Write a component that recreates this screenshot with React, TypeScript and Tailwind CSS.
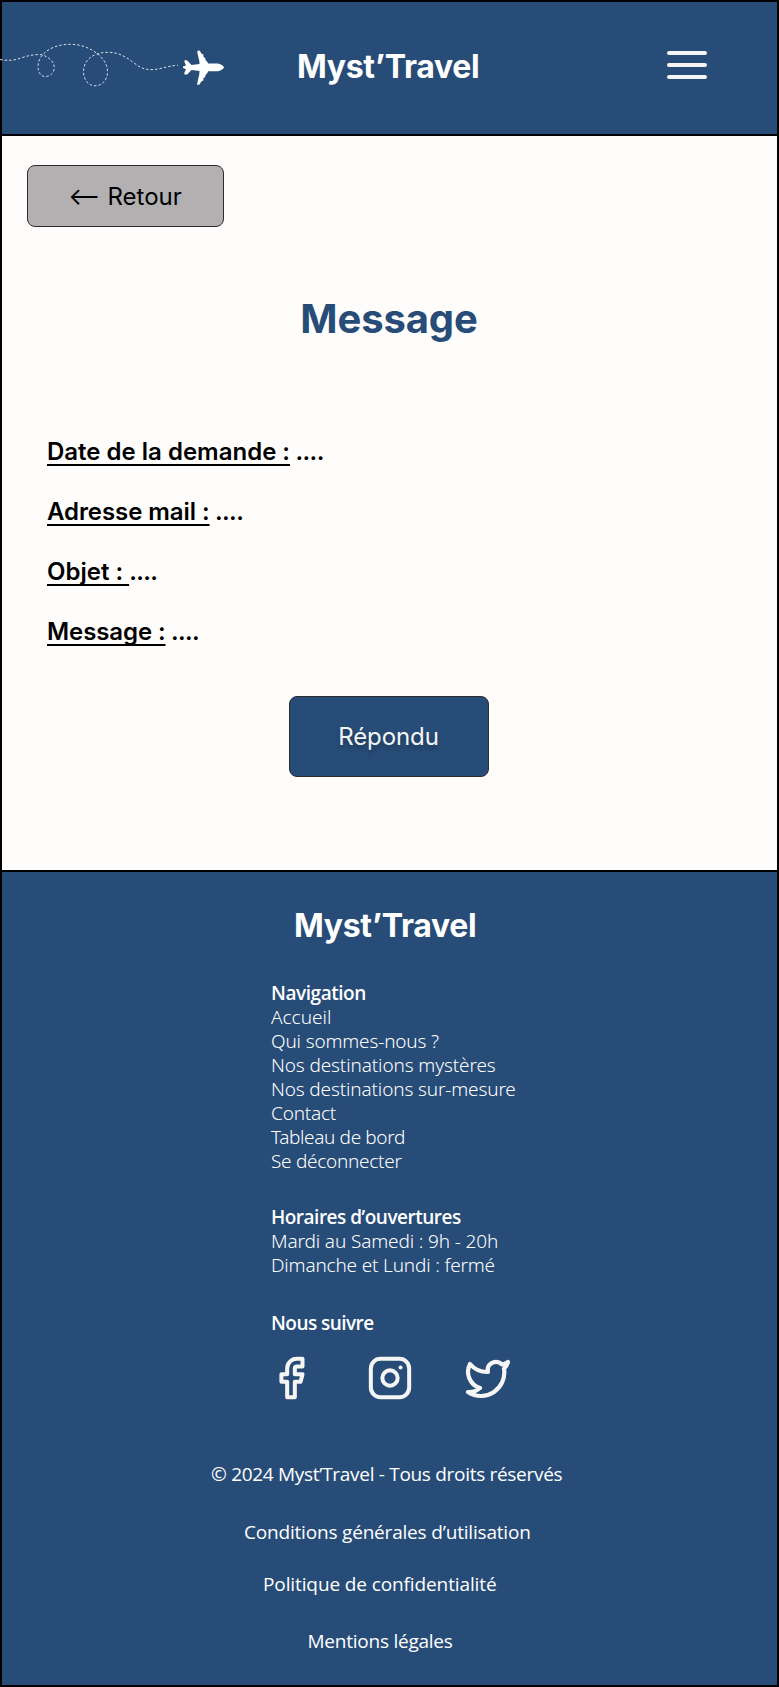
const logo = "font-['Inter',sans-serif] text-[32px] leading-[39px] font-bold tracking-[-0.33px] text-white";

const fields = [
  { label: "Date de la demande :", value: " ....", tracking: "" },
  { label: "Adresse mail :", value: " ....", tracking: "tracking-[-0.07px]" },
  { label: "Objet : ", value: "....", tracking: "" },
  { label: "Message :", value: " ....", tracking: "tracking-[-0.1px]" },
];

const navigation = [
  { text: "Accueil", tracking: "tracking-[0px]" },
  { text: "Qui sommes-nous ?", tracking: "tracking-[-0.16px]" },
  { text: "Nos destinations mystères", tracking: "tracking-[-0.12px]" },
  { text: "Nos destinations sur-mesure", tracking: "tracking-[-0.14px]" },
  { text: "Contact", tracking: "tracking-[-0.2px]" },
  { text: "Tableau de bord", tracking: "tracking-[-0.36px]" },
  { text: "Se déconnecter", tracking: "tracking-[-0.28px]" },
];

function Flight() {
  return (
    <svg className="block h-[132px] w-[226px] shrink-0 overflow-visible" viewBox="2 2 226 132" fill="none">
      <path
        d="M0 59.5C8 61 14 60.5 20 58.3C28 55.5 36 54 42 54.8C49 57 54.5 62 54.3 68C54 73 50 76.5 45.5 76.5C40.500 76.500 38 72 38 67C38 61 40.500 56.500 45 52.500C52 46.500 61 44.300 70 44.300C81 44.300 90 48 97 53.500C104 59 107.500 65 107.500 72C107.500 80 102 85.800 95 85.800C88 85.800 83.500 79.500 83.500 71.500C83.500 61 92 52.300 108 52.300C119 52.300 126 57 134 63C141 68 144 69.600 152 69.600C160 69.600 166 66 178 65.300"
        stroke="#E2E7ED"
        strokeWidth="0.95"
        strokeDasharray="2.500 2"
      />
      <path
        d="M183 66.5L186 65.500L184.300 61.500L185 60L187.200 60.500L191.500 65L199.500 64L199.300 61L197.200 52L198 50.500L199.800 50.700L201.300 53.500L203.300 54.500L203.500 57L205.200 58L205.500 60L207 61.500L208.300 63.600L218 63.600C221.500 64.300 223.500 66 224 67.300C223.500 68.800 221.500 70.500 218 71.200L208.300 71.200L207 73.500L205.500 75L205.200 77L203.500 78L203.300 80.500L201.300 81.500L199.500 84.500L197.300 84.900L197.300 83L199.300 74L199.500 71L191.500 70L187.200 74.500L184.500 74.500L184.300 73L186 69.200L183 68Z"
        fill="white"
      />
    </svg>
  );
}

const iconProps = {
  viewBox: "0 0 24 24",
  fill: "none",
  stroke: "#F5F5F5",
  strokeWidth: 2.1,
  strokeLinecap: "round",
  strokeLinejoin: "round",
} as const;

export default function App() {
  return (
    <div className="flex h-[1687px] w-[779px] flex-col border-2 border-black bg-[#FFFDFC] text-black">
      <header className="flex h-[134px] shrink-0 items-start border-b-2 border-black bg-[#274C77]">
        <Flight />
        <h1 className={`ml-[69px] mt-[45px] w-[186px] whitespace-nowrap ${logo}`}>Myst’Travel</h1>
        <button aria-label="Menu" className="ml-[184px] mt-[49px] flex w-10 flex-col gap-2">
          <span className="h-1 rounded-sm bg-[#F5F5F5]" />
          <span className="h-1 rounded-sm bg-[#F5F5F5]" />
          <span className="h-1 rounded-sm bg-[#F5F5F5]" />
        </button>
      </header>

      <main className="flex h-[734px] shrink-0 flex-col font-['Inter',sans-serif] text-2xl">
        <button className="ml-[25px] mt-[29px] flex h-[62px] w-[197px] items-center justify-center gap-[7px] rounded-lg border border-[#2C2C2C] bg-[#B2B0B1] pr-px leading-[29px]">
          <span>⟵</span>
          <span>Retour</span>
        </button>
        <h2 className="mt-[68px] pr-px text-center text-[40px] leading-[48px] font-bold tracking-[-0.1px] text-[#274C77]">Message</h2>
        <div className="ml-[45px] mt-[94px] flex flex-col gap-[31px] font-semibold leading-[29px]">
          {fields.map((f) => (
            <p key={f.label} className="whitespace-pre">
              <span className={`underline decoration-[1.5px] underline-offset-[4px] [text-decoration-skip-ink:none] ${f.tracking}`}>{f.label}</span>
              <span className="tracking-[-0.6px]">{f.value}</span>
            </p>
          ))}
        </div>
        <button className="ml-[287px] mt-[50px] h-[81px] w-[200px] rounded-lg border border-[#2C2C2C] bg-[#274C77] pt-px pr-px font-normal tracking-[-0.1px] text-[#F5F5F5] [text-shadow:0_4px_4px_rgba(0,0,0,0.25)]">
          Répondu
        </button>
      </main>

      <footer className="flex grow flex-col border-t-2 border-black bg-[#274C77] font-['Open_Sans',sans-serif] text-[19px] leading-6 text-white">
        <h2 className={`ml-[292px] mt-[34px] ${logo}`}>Myst’Travel</h2>
        <nav className="ml-[269px] mt-[36px]">
          <h3 className="font-semibold tracking-[-0.45px]">Navigation</h3>
          <ul className="font-['Noto_Sans',sans-serif] font-light">
            {navigation.map((n) => (
              <li key={n.text} className={n.tracking}>{n.text}</li>
            ))}
          </ul>
        </nav>
        <section className="ml-[269px] mt-8">
          <h3 className="font-semibold tracking-[-0.5px]">Horaires d’ouvertures</h3>
          <div className="font-['Noto_Sans',sans-serif] font-light">
            <p className="tracking-[-0.13px]">Mardi au Samedi : 9h - 20h</p>
            <p className="tracking-[-0.17px]">Dimanche et Lundi : fermé</p>
          </div>
        </section>
        <section className="mt-[34px]">
          <h3 className="ml-[269px] font-semibold tracking-[-0.55px]">Nous suivre</h3>
          <div className="ml-[266px] mt-5 flex h-[46px] items-center">
            <svg {...iconProps} className="size-[46px]">
              <path d="M18 2h-3a5 5 0 0 0-5 5v3H7v4h3v8h4v-8h3l1-4h-4V7a1 1 0 0 1 1-1h3z" />
            </svg>
            <svg {...iconProps} className="ml-[53px] size-[46px]">
              <rect x="2" y="2" width="20" height="20" rx="5" />
              <circle cx="12" cy="12" r="4" />
              <path d="M17.500 6.500h.01" />
            </svg>
            <svg {...iconProps} className="ml-[51px] size-[48px]">
              <path d="M22 4s-.7 2.100-2 3.400c1.600 10-9.400 17.300-18 11.600 2.200.1 4.400-.6 6-2C3 15.500.5 9.600 3 5c2.200 2.600 5.600 4.100 9 4-.9-4.200 4-6.600 7-3.800 1.100 0 3-1.200 3-1.200z" />
            </svg>
          </div>
        </section>
        <div className="mt-[61px] flex flex-col whitespace-nowrap">
          <p className="ml-[209px] tracking-[-0.3px]">© 2024 Myst’Travel - Tous droits réservés</p>
          <p className="ml-[242px] mt-[34px] tracking-[-0.19px]">Conditions générales d’utilisation</p>
          <p className="ml-[261px] mt-[28px] tracking-[-0.11px]">Politique de confidentialité</p>
          <p className="ml-[305.500px] mt-[33px] tracking-[-0.24px]">Mentions légales</p>
        </div>
      </footer>
    </div>
  );
}
